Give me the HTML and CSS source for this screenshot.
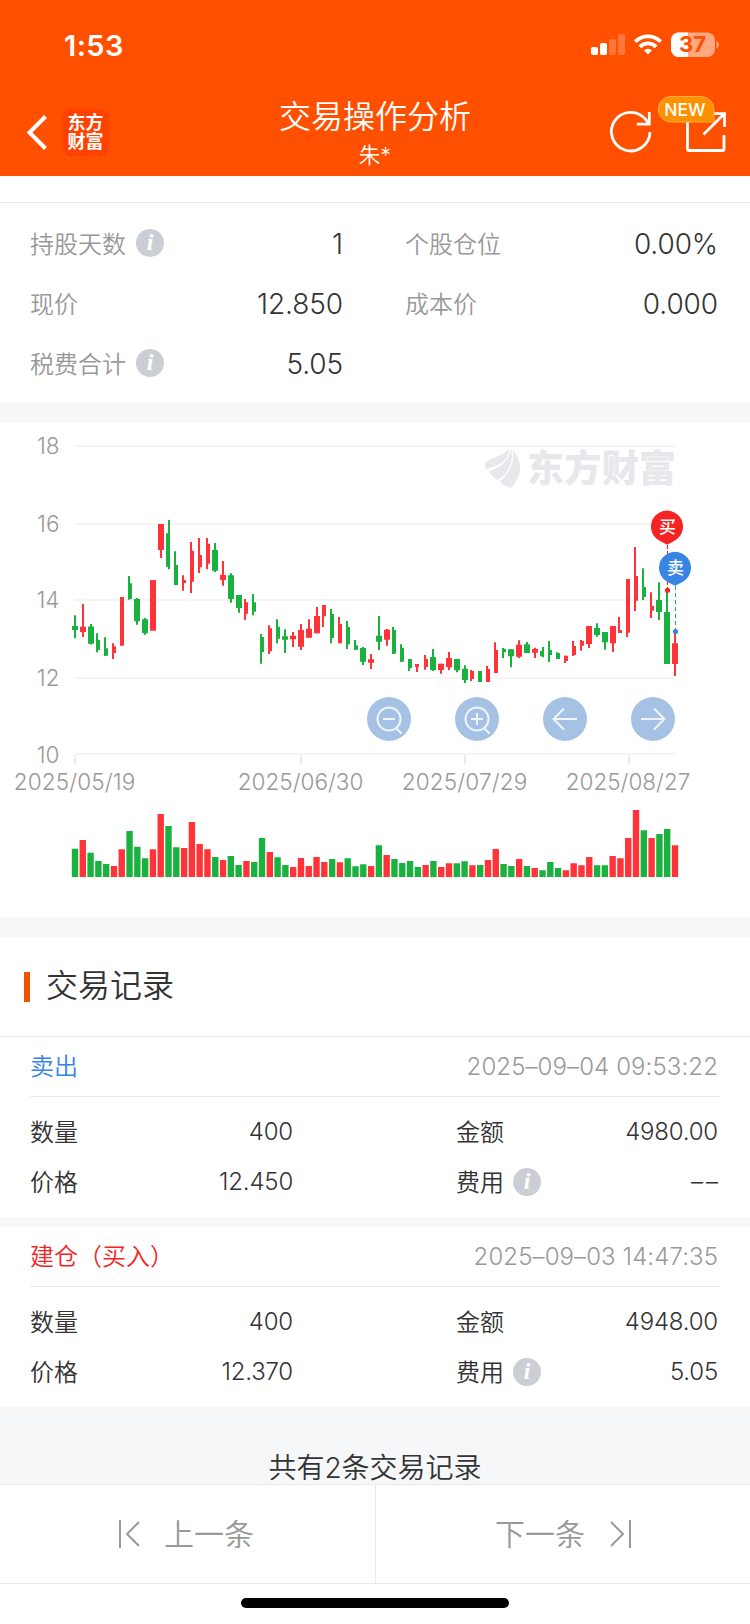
FILE: index.html
```html
<!DOCTYPE html>
<html lang="zh-CN">
<head>
    <meta charset="UTF-8">
    <meta name="viewport" content="width=device-width, initial-scale=1">
    <title>交易操作分析</title>
    <link rel="stylesheet" href="styles.css">
</head>
<body>
    <header class="header">
        <div class="statusbar">
            <span class="time">1:53</span>
            <svg class="status-icons" width="130" height="30" viewBox="590 30 130 30">
                <g fill="#fff">
                    <rect x="591" y="47" width="7" height="8" rx="2"/>
                    <rect x="600" y="43" width="7" height="12" rx="2"/>
                    <rect x="609" y="39" width="7" height="16" rx="2" opacity=".22"/>
                    <rect x="618" y="34" width="7" height="21" rx="2" opacity=".22"/>
                    <path d="M648 54.5l-4-4.2a5.8 5.8 0 0 1 8 0z"/>
                </g>
                <g fill="none" stroke="#fff" stroke-width="3.8">
                    <path d="M635.3 41.6a18 18 0 0 1 25.4 0"/>
                    <path d="M639.9 46.8a11.5 11.5 0 0 1 16.2 0"/>
                </g>
                <rect x="671" y="32.5" width="44" height="24.5" rx="7.5" fill="#ffa780"/>
                <path d="M688 32.5h-9.500a7.500 7.500 0 0 0-7.500 7.500v9.500a7.500 7.500 0 0 0 7.500 7.500h9.500z" fill="#fff"/>
                <path d="M716.500 41q2.500 1 2.500 3.700t-2.500 3.700z" fill="#ffa780"/>
                <text class="battery-text" x="692.500" y="52.400" text-anchor="middle">37</text>
            </svg>
        </div>
        <nav class="navbar">
            <div class="nav-left">
                <svg width="22" height="40" viewBox="26 112 22 40">
                    <path d="M45.500 116.500L29.500 132.500L45.500 148.500" fill="none" stroke="#fff" stroke-width="4"/>
                </svg>
                <div class="logo">东方<br>财富</div>
            </div>
            <div class="nav-title">
                <h1>交易操作分析</h1>
                <p>朱*</p>
            </div>
            <svg class="nav-right" width="126" height="62" viewBox="606 94 126 62">
                <g fill="none" stroke="#fff" stroke-width="2.800">
                    <path d="M650 132a19.300 19.300 0 1 1-4.200-12.400l3.600 4.400"/>
                    <path d="M649.300 112v12.200h-12.500"/>
                    <path d="M687.500 118v31.500q0 1 1 1h34.500q1 0 1-1v-14.500M713 113.600h11.500v13.500M724 114l-20.500 20.500"/>
                </g>
                <path d="M671 96.500h30a13 13 0 0 1 13 13v12.500h-43a12.750 12.750 0 0 1 0-25.500z" fill="#ff9100" stroke="#ffae45" stroke-width="1"/>
                <text class="new-text" x="685" y="116" text-anchor="middle">NEW</text>
            </svg>
        </nav>
    </header>

    <main>
        <section class="summary">
            <div class="item"><span class="label">持股天数</span><i class="info">i</i><span class="num">1</span></div>
            <div class="item"><span class="label">个股仓位</span><span class="num">0.00%</span></div>
            <div class="item"><span class="label">现价</span><span class="num">12.850</span></div>
            <div class="item"><span class="label">成本价</span><span class="num">0.000</span></div>
            <div class="item"><span class="label">税费合计</span><i class="info">i</i><span class="num">5.05</span></div>
        </section>

        <section class="chart">
            <svg width="750" height="494" viewBox="0 423 750 494">
                <!-- grid -->
                <path class="grid" d="M75 446H675M75 524H675M75 600H675M75 678H675M75 754H675"/>
                <path class="tick" d="M75 755V764M301 755V764M465 755V764M629 755V764"/>
                <g class="axis" text-anchor="end">
                    <text x="59.500" y="454">18</text>
                    <text x="59.500" y="532">16</text>
                    <text x="59.500" y="608">14</text>
                    <text x="59.500" y="686">12</text>
                    <text x="59.500" y="762.500">10</text>
                </g>
                <g class="axis">
                    <text x="13.800" y="790" textLength="121.500">2025/05/19</text>
                    <text x="237.800" y="790" textLength="125.500">2025/06/30</text>
                    <text x="401.800" y="790" textLength="125.500">2025/07/29</text>
                    <text x="565.800" y="790" textLength="124.500">2025/08/27</text>
                </g>

                <!-- watermark -->
                <g fill="#e7e7ec">
                    <path d="M485 465C487 457 500 459 509 449C509 461 498 466 486 469Z"/>
                    <path d="M489 471C500 468 509 462 511 449C514 462 508 475 497 480Q491 476 489 471Z"/>
                    <path d="M500 481C509 474 515 463 513 450C524 463 521 477 511 488Q503 486 500 481Z"/>
                    <text class="watermark" x="527" y="482" textLength="149">东方财富</text>
                </g>

                <!-- candles: wicks, narrow bodies, wide bodies -->
                <g class="up">
                    <path class="wick" d="M83 604V637M113 643.300V659M161 524V558M183 575.300V590.700M191 542V593M199 538V573M207 538V569.300M223 561V585.700M245 599V620M269 625.300V654M293 632V647M301 624V650M309 619.300V637.700M317 607V633.300M323 605V627M339 617V643.300M371 654V669M387 629V645.700M417 664V672M425 655V669.700M441 663.700V673.700M449 652V670M471 670V681M487 666V682M495 642.300V673M519 640.300V658M535 647.700V658M565 655.700V663M573 641V656M581 640V650.700M589 626V648M613 626V652M619 617V633M627 579V637M635 547V611M651 592.300V618M675 632V676"/>
                    <path class="thin" d="M114 646.300V653M122 597V645.700M184 580V583M192 550.700V581.700M200 555V567.300M208 543.700V563.700M246 602.300V613.700M270 628.300V651.300M324 605V616.300M340 624V643.300M417 664V667M426 659V667M472 671V679M488 669V682M496 650V673M566 655.700V661M574 646V655M582 641V645.700M620 630V633M628 579V632.700M636 576V600.700M652 606V610.700"/>
                    <path class="wide" d="M83 626.700V632M153 580V630.700M161 524V550M223 575V580M293 635.700V639.300M301 630V646.700M309 628.700V637.700M317 616V633.300M371 659.300V662.700M387 629.700V639.700M441 663.700V670M449 658V667.300M519 644.700V656.700M535 649V652.700M589 626V644M613 626V643.300M675 643.300V664"/>
                </g>
                <g class="down">
                    <path class="wick" d="M75 615.300V638.300M91 624V644.500M97 633.300V652.300M105 637.300V655.700M129 576V599.700M137 598V624.700M145 618V634.700M169 520V569.300M175 551.300V585M215 543V572M231 573.300V602.700M239 595V612.700M253 594V615.300M261 634V663.700M277 619.300V643.300M285 629.300V653M331 609V643.300M347 621V649M355 640V650M363 647V665M379 616V650M393 627V654M401 644.300V661.700M409 659V671M433 649V671M457 659V672.300M465 665.300V683M503 648V658M511 649.300V667.300M527 642V653M543 647V657.300M549 641V662M557 652.300V659M597 623.300V636.700M605 632V649.700M643 568.300V600M659 582.300V620M667 590V664"/>
                    <path class="thin" d="M98 640V650M106 648.300V655.700M130 583.300V599M168 533.300V566.700M176 565V585M254 602.300V611.700M262 637V652M278 626.700V638.700M332 614V638M348 627V644.300M356 645.300V649.700M394 630V653.700M402 648V661.700M410 659V668M480 671V682M504 649V652.300M542 651V656.300M550 650V655M558 653V659M644 587V597"/>
                    <path class="wide" d="M75 626V630M91 626.500V643.700M137 599V621.300M145 619.300V633.300M215 550V570.700M231 575.300V599M239 595V608M285 636.300V639.700M363 648V661.700M379 635.700V641.700M433 657V670M457 659V670.300M465 668.700V680M511 649.300V656.300M527 644.300V653M597 628V635M605 632V642.300M659 600V612M667 612V664"/>
                </g>

                <!-- volume: one unit on x is one trading day -->
                <g class="volume" transform="translate(75 877) scale(7.792 -.3333)">
                    <path class="up" d="M1 0V111M5 0V33M6 0V83M10 0V83M11 0V189M14 0V87M15 0V165M16 0V99M17 0V83M19 0V51M22 0V48M25 0V75M28 0V30M29 0V57M30 0V33M31 0V60M32 0V45M34 0V44M38 0V33M40 0V66M45 0V36M47 0V30M48 0V41M51 0V35M53 0V51M54 0V84M57 0V54M59 0V27M63 0V20M64 0V41M65 0V35M66 0V60M69 0V63M70 0V56M71 0V117M72 0V201M74 0V117M77 0V95"/>
                    <path class="down" d="M0 0V85M2 0V73M3 0V48M4 0V39M7 0V138M8 0V91M9 0V56M12 0V153M13 0V89M18 0V60M20 0V63M21 0V36M23 0V45M24 0V117M26 0V59M27 0V36M33 0V54M35 0V56M36 0V32M37 0V38M39 0V95M41 0V54M42 0V42M43 0V48M44 0V30M46 0V48M49 0V41M50 0V47M52 0V36M55 0V39M56 0V33M58 0V33M60 0V20M61 0V45M62 0V27M67 0V35M68 0V35M73 0V140M75 0V129M76 0V144"/>
                </g>

                <!-- buy / sell pins -->
                <path d="M667.500 545V590" stroke="#f52323" stroke-dasharray="4 2"/>
                <circle cx="667.500" cy="590.300" r="2.600" fill="#f52323"/>
                <path d="M667.300 544.800L660 541A16 16 0 1 1 674 541Z" fill="#f52323"/>
                <text class="pin-text" x="667.500" y="533">买</text>
                <path d="M675.500 586V631" stroke="#3784e4" stroke-dasharray="4 3"/>
                <circle cx="675.500" cy="631.500" r="2.600" fill="#3784e4"/>
                <path d="M675 585.800L668 582.200A16 16 0 1 1 682 582.200Z" fill="#3784e4"/>
                <text class="pin-text" x="675.500" y="574.200">卖</text>

                <!-- chart buttons -->
                <g fill="#a5c2e4">
                    <circle cx="389" cy="719" r="22"/>
                    <circle cx="477" cy="719" r="22"/>
                    <circle cx="565" cy="719" r="22"/>
                    <circle cx="653" cy="719" r="22"/>
                </g>
                <g class="btn-icon">
                    <circle cx="389" cy="719" r="11.500"/>
                    <path d="M383 719h12M396 728l5.500 5.500"/>
                    <circle cx="477" cy="719" r="11.500"/>
                    <path d="M471 719h12M477 713v12M484 728l5.500 5.500"/>
                    <path d="M577 719h-23.500M564 708.500L553.500 719L564 729.500"/>
                    <path d="M641 719h23.500M654 708.500L664.500 719L654 729.500"/>
                </g>
            </svg>
        </section>

        <h2 class="section-title">交易记录</h2>

        <section class="record">
            <div class="record-head"><span class="name sell">卖出</span><time>2025–09–04 09:53:22</time></div>
            <div class="record-body">
                <div class="cell"><span class="name">数量</span><span class="num">400</span></div>
                <div class="cell"><span class="name">金额</span><span class="num">4980.00</span></div>
                <div class="cell"><span class="name">价格</span><span class="num">12.450</span></div>
                <div class="cell"><span class="name">费用</span><i class="info">i</i><span class="num dash">––</span></div>
            </div>
        </section>
        <section class="record">
            <div class="record-head"><span class="name buy">建仓（买入）</span><time>2025–09–03 14:47:35</time></div>
            <div class="record-body">
                <div class="cell"><span class="name">数量</span><span class="num">400</span></div>
                <div class="cell"><span class="name">金额</span><span class="num">4948.00</span></div>
                <div class="cell"><span class="name">价格</span><span class="num">12.370</span></div>
                <div class="cell"><span class="name">费用</span><i class="info">i</i><span class="num">5.05</span></div>
            </div>
        </section>
        <p class="total">共有2条交易记录</p>
    </main>

    <footer>
        <div class="pager">
            <a class="prev">
                <svg width="24" height="30" viewBox="0 0 24 30"><path d="M2 1v28M21 3L9 15l12 12"/></svg>
                <span>上一条</span>
            </a>
            <a class="next">
                <span>下一条</span>
                <svg width="24" height="30" viewBox="0 0 24 30"><path d="M22 1v28M3 3l12 12L3 27"/></svg>
            </a>
        </div>
        <div class="home-bar"></div>
    </footer>
</body>
</html>
```

FILE: styles.css
```css
* {
    box-sizing: border-box;
}
body {
    margin: 0;
    width: 750px;
    height: 1624px;
    overflow: hidden;
    background-color: #fff;
    color: #333;
    font-family: Inter, "Noto Sans CJK SC", sans-serif;
    font-size: 24px;
    font-weight: 350;
}
h1, h2, p {
    margin: 0;
    font-weight: 350;
}

/* header */
.header {
    height: 176px;
    background-color: #ff5000;
    color: #fff;
}
.statusbar {
    display: flex;
    justify-content: space-between;
    align-items: center;
    height: 90px;
    padding: 0 30px 0 64px;
}
.time {
    font-size: 29px;
    font-weight: 600;
    letter-spacing: .4px;
}
.battery-text {
    font-size: 22px;
    font-weight: 700;
    fill: #ff5000;
}
.navbar {
    display: grid;
    grid-template-columns: 200px 1fr 200px;
    height: 86px;
}
.nav-left {
    display: flex;
    align-items: center;
    gap: 14px;
    height: 84px;
    padding-left: 26px;
}
.logo {
    width: 47px;
    height: 47px;
    padding-top: 4px;
    border-radius: 9px;
    background-color: #ff4200;
    font-size: 18px;
    font-weight: 700;
    line-height: 19.500px;
    text-align: center;
}
.nav-title {
    text-align: center;
}
.nav-title h1 {
    height: 50px;
    font-size: 32px;
    line-height: 54px;
}
.nav-title p {
    font-size: 21.500px;
    line-height: 31px;
}
.nav-right {
    justify-self: end;
    margin: 4px 18px 0 0;
}
.new-text {
    font-size: 17.500px;
    font-weight: 500;
    fill: #fff;
}

/* summary */
.summary {
    display: grid;
    grid-template-columns: 1fr 1fr;
    grid-auto-rows: 60px;
    margin-top: 26px;
    padding: 10px 0;
    height: 201px;
    border-top: 1px solid #ebebeb;
}
.item {
    display: flex;
    align-items: center;
    padding: 0 32px 0 30px;
}
.label {
    padding-bottom: 2px;
    color: #999;
}
.info {
    width: 28px;
    height: 28px;
    margin-left: 10px;
    border-radius: 50%;
    background-color: #cbcfd5;
    color: #fff;
    font: italic bold 24px/27px "Liberation Serif", serif;
    text-align: center;
}
.num {
    margin-left: auto;
}
.item .num {
    padding-top: 1px;
    font-size: 28px;
    letter-spacing: -.1px;
}

/* chart */
.chart {
    height: 534px;
    border-top: 20px solid #f7f7f7;
    border-bottom: 20px solid #f7f7f7;
}
.chart svg {
    display: block;
}
.grid {
    stroke: #f4f4f4;
    stroke-width: 2;
}
.tick {
    stroke: #ebebeb;
    stroke-width: 2;
}
.axis {
    font-size: 22.500px;
    fill: #999;
}
.watermark {
    font-size: 37px;
    font-weight: 900;
}
.up {
    stroke: #ff3338;
}
.down {
    stroke: #1ab23f;
}
.wick {
    stroke-width: 2;
}
.thin {
    stroke-width: 4;
}
.wide {
    stroke-width: 6;
}
.volume {
    stroke-width: .82;
}
.pin-text {
    font-size: 17px;
    font-weight: 500;
    fill: #fff;
    text-anchor: middle;
}
.btn-icon {
    fill: none;
    stroke: #f0f5fc;
    stroke-width: 2;
}

/* records */
.section-title {
    display: flex;
    gap: 16px;
    height: 99px;
    padding-left: 24px;
    font-size: 32px;
    line-height: 98px;
}
.section-title::before {
    content: "";
    width: 6px;
    height: 30px;
    margin-top: 35px;
    background-color: #ea5504;
}
.record {
    height: 190px;
    border-bottom: 10px solid #f7f7f7;
}
.section-title + .record {
    height: 191px;
    border-top: 1px solid #ebebeb;
}
.record-head {
    display: flex;
    align-items: center;
    justify-content: space-between;
    height: 60px;
    margin: 0 30px;
    padding-right: 2px;
    border-bottom: 1px solid #ebebeb;
}
.record-head time {
    color: #999;
    letter-spacing: .1px;
}
.name {
    padding-bottom: 4px;
}
.sell {
    color: #3784e4;
}
.buy {
    color: #f52323;
}
.record-body {
    display: grid;
    grid-template-columns: 263px 262px;
    grid-auto-rows: 50px;
    justify-content: space-between;
    padding: 10px 32px 0 30px;
}
.cell {
    display: flex;
    align-items: center;
}
.cell .info {
    margin-left: 9px;
}
.cell .num {
    padding-bottom: 1px;
    letter-spacing: -.2px;
}
.cell .dash {
    margin-right: -3px;
    letter-spacing: 3px;
}
.total {
    height: 67px;
    background-color: #f6f7f9;
    font-size: 28px;
    line-height: 102px;
    text-align: center;
}

/* bottom bar */
.pager {
    display: grid;
    grid-template-columns: 376px 374px;
    height: 100px;
    border-top: 1px solid #ebebeb;
    border-bottom: 1px solid #ebebeb;
    background-color: #fff;
    position: relative;
}
.pager a {
    display: flex;
    align-items: center;
    color: #999;
    font-size: 30px;
}
.pager span {
    padding-bottom: 4px;
}
.pager svg {
    fill: none;
    stroke: #999;
    stroke-width: 2;
}
.prev {
    gap: 22px;
    padding-left: 118px;
    border-right: 1px solid #ebebeb;
}
.next {
    gap: 23px;
    padding-left: 119px;
}
.home-bar {
    width: 268px;
    height: 10px;
    margin: 14px auto 0;
    border-radius: 5px;
    background-color: #000;
}
```
